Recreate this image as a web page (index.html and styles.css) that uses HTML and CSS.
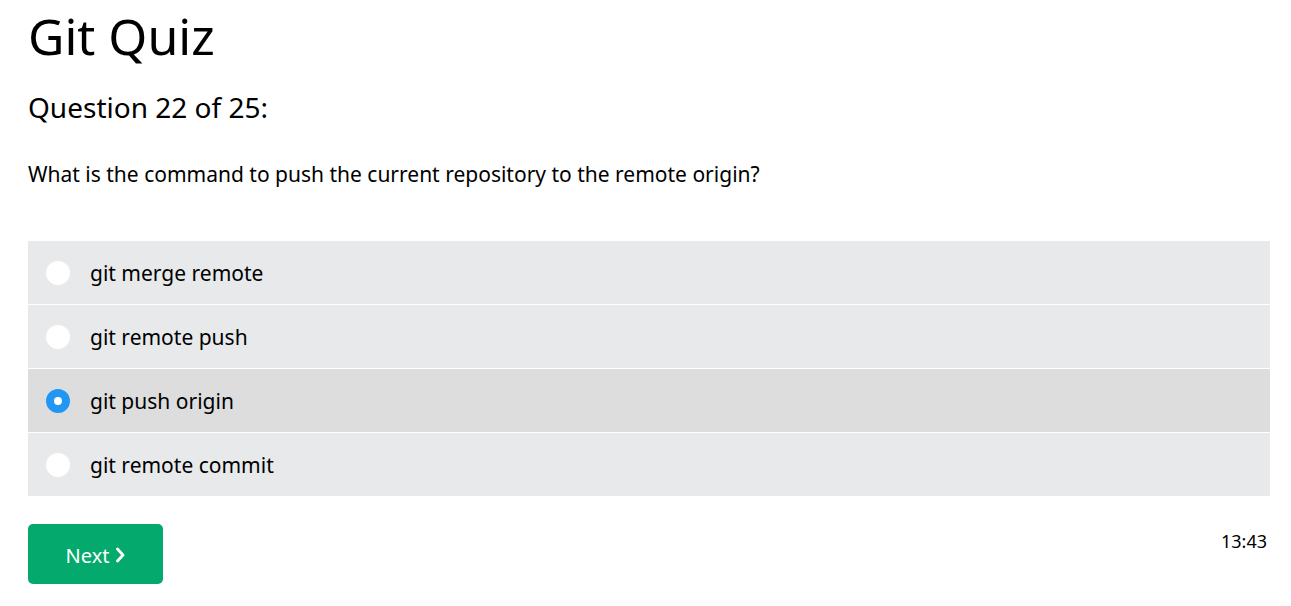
FILE: index.html
```html
<!DOCTYPE html>
<html>
<head>
<meta charset="utf-8">
<link rel="stylesheet" href="styles.css">
</head>
<body>
<div class="quiz">
  <h1 class="title">Git Quiz</h1>
  <h2 class="qnum">Question 22 of 25:</h2>
  <p class="qtext">What is the command to push the current repository to the remote origin?</p>
  <div class="options">
    <label class="opt"><span class="radio"></span><span class="otext">git merge remote</span></label>
    <label class="opt"><span class="radio"></span><span class="otext">git remote push</span></label>
    <label class="opt selected"><span class="radio checked"></span><span class="otext">git push origin</span></label>
    <label class="opt"><span class="radio"></span><span class="otext">git remote commit</span></label>
  </div>
  <div class="footer">
    <button class="next">Next<svg class="chev" width="9" height="16" viewBox="0 0 9 16"><polyline points="1.5,2 7,8 1.5,14" fill="none" stroke="#fff" stroke-width="2.8" stroke-linecap="round" stroke-linejoin="round"/></svg></button>
    <span class="timer">13:43</span>
  </div>
</div>
</body>
</html>
```
FILE: styles.css
```css
html, body {
  margin: 0;
  padding: 0;
  background: #fff;
}
body {
  font-family: "Noto Sans", "Open Sans", sans-serif;
  color: #000;
}
.quiz {
  width: 1242px;
  padding-left: 28px;
}
.title {
  font-size: 50px;
  font-weight: 400;
  margin: 0;
  padding-top: 4px;
  line-height: 64px;
}
.qnum {
  font-size: 28px;
  font-weight: 400;
  margin: 0;
  padding-top: 21px;
  line-height: 36px;
}
.qtext {
  font-size: 21px;
  margin: 0;
  padding-top: 35px;
  line-height: 28px;
}
.options {
  margin-top: 53px;
  display: flex;
  flex-direction: column;
  gap: 1px;
}
.opt {
  height: 63px;
  background: #e7e9eb;
  display: flex;
  align-items: center;
}
.opt.selected {
  background: #dddddd;
}
.radio {
  width: 24px;
  height: 24px;
  border-radius: 50%;
  background: #fff;
  margin-left: 18px;
  box-sizing: border-box;
}
.radio.checked {
  background: #fff;
  border: 8px solid #2196f3;
}
.otext {
  font-size: 21px;
  margin-left: 20px;
}
.footer {
  display: flex;
  justify-content: space-between;
  align-items: flex-start;
  margin-top: 28px;
}
.next {
  width: 135px;
  height: 60px;
  background: #04aa6d;
  color: #fff;
  border: none;
  border-radius: 5px;
  font-family: "Noto Sans", "Open Sans", sans-serif;
  font-size: 20px;
  padding: 2px 0 0 0;
  display: flex;
  align-items: center;
  justify-content: center;
  gap: 7px;
}
.chev {
  display: block;
}
.timer {
  font-size: 18px;
  margin-top: 5px;
  margin-right: 3px;
}
```
